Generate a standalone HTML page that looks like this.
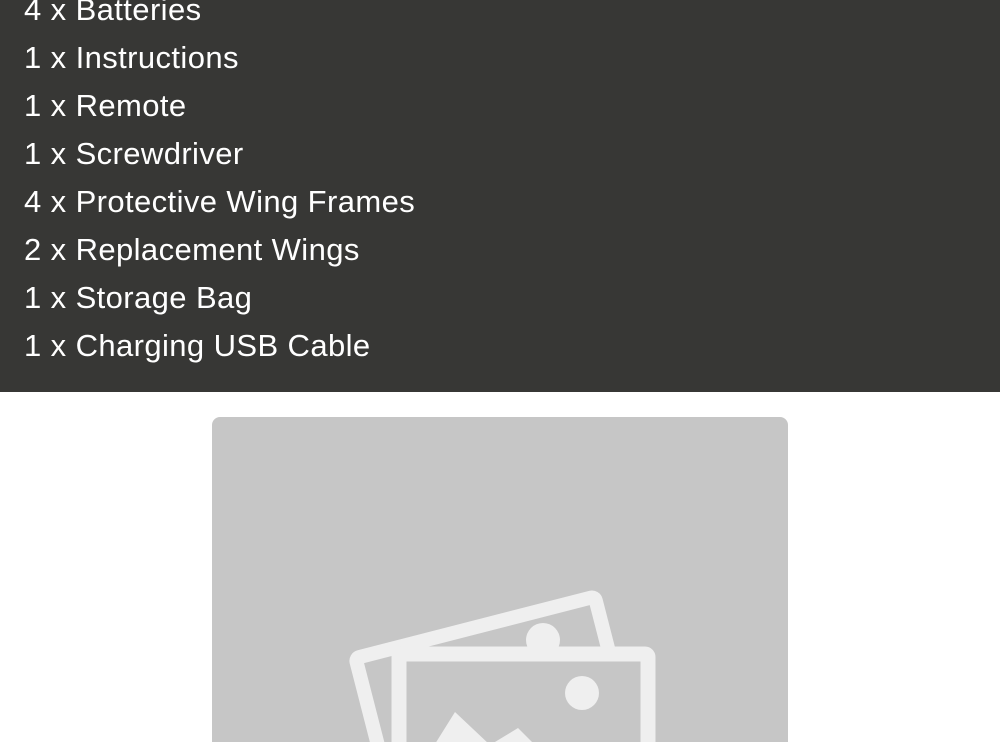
<!DOCTYPE html>
<html><head><meta charset="utf-8"><style>
html,body{margin:0;padding:0;width:1000px;height:742px;overflow:hidden;background:#fff}
.dark{position:absolute;left:0;top:0;width:1000px;height:392px;background:#373735}
.list{position:absolute;left:24px;top:-14px;font-family:"Liberation Sans",sans-serif;font-size:31px;line-height:48px;color:#fff;letter-spacing:0.4px}
.ph{position:absolute;left:212px;top:417px;width:576px;height:325px;background:#c6c6c6;border-radius:8px 8px 0 0}
svg{position:absolute;left:0;top:0;overflow:hidden}
</style></head><body>
<div class="dark"><div class="list">
<div>4 x Batteries</div><div>1 x Instructions</div><div>1 x Remote</div><div>1 x Screwdriver</div><div>4 x Protective Wing Frames</div><div>2 x Replacement Wings</div><div>1 x Storage Bag</div><div>1 x Charging USB Cable</div>
</div></div>
<div class="ph"></div>
<svg width="1000" height="742">
<g transform="rotate(-14.4 347 653)">
<rect x="354" y="660" width="247" height="220" fill="none" stroke="#efefef" stroke-width="14" rx="4"/>
</g>
<circle cx="543" cy="640" r="17" fill="#efefef"/>
<rect x="399" y="654" width="249" height="200" fill="#c6c6c6" stroke="#efefef" stroke-width="15" rx="3"/>
<circle cx="582" cy="693" r="17" fill="#efefef"/>
<path d="M425 760 L455 712 L490 745 L518 728 L560 770 L425 770Z" fill="#efefef"/>
</svg>
</body></html>
